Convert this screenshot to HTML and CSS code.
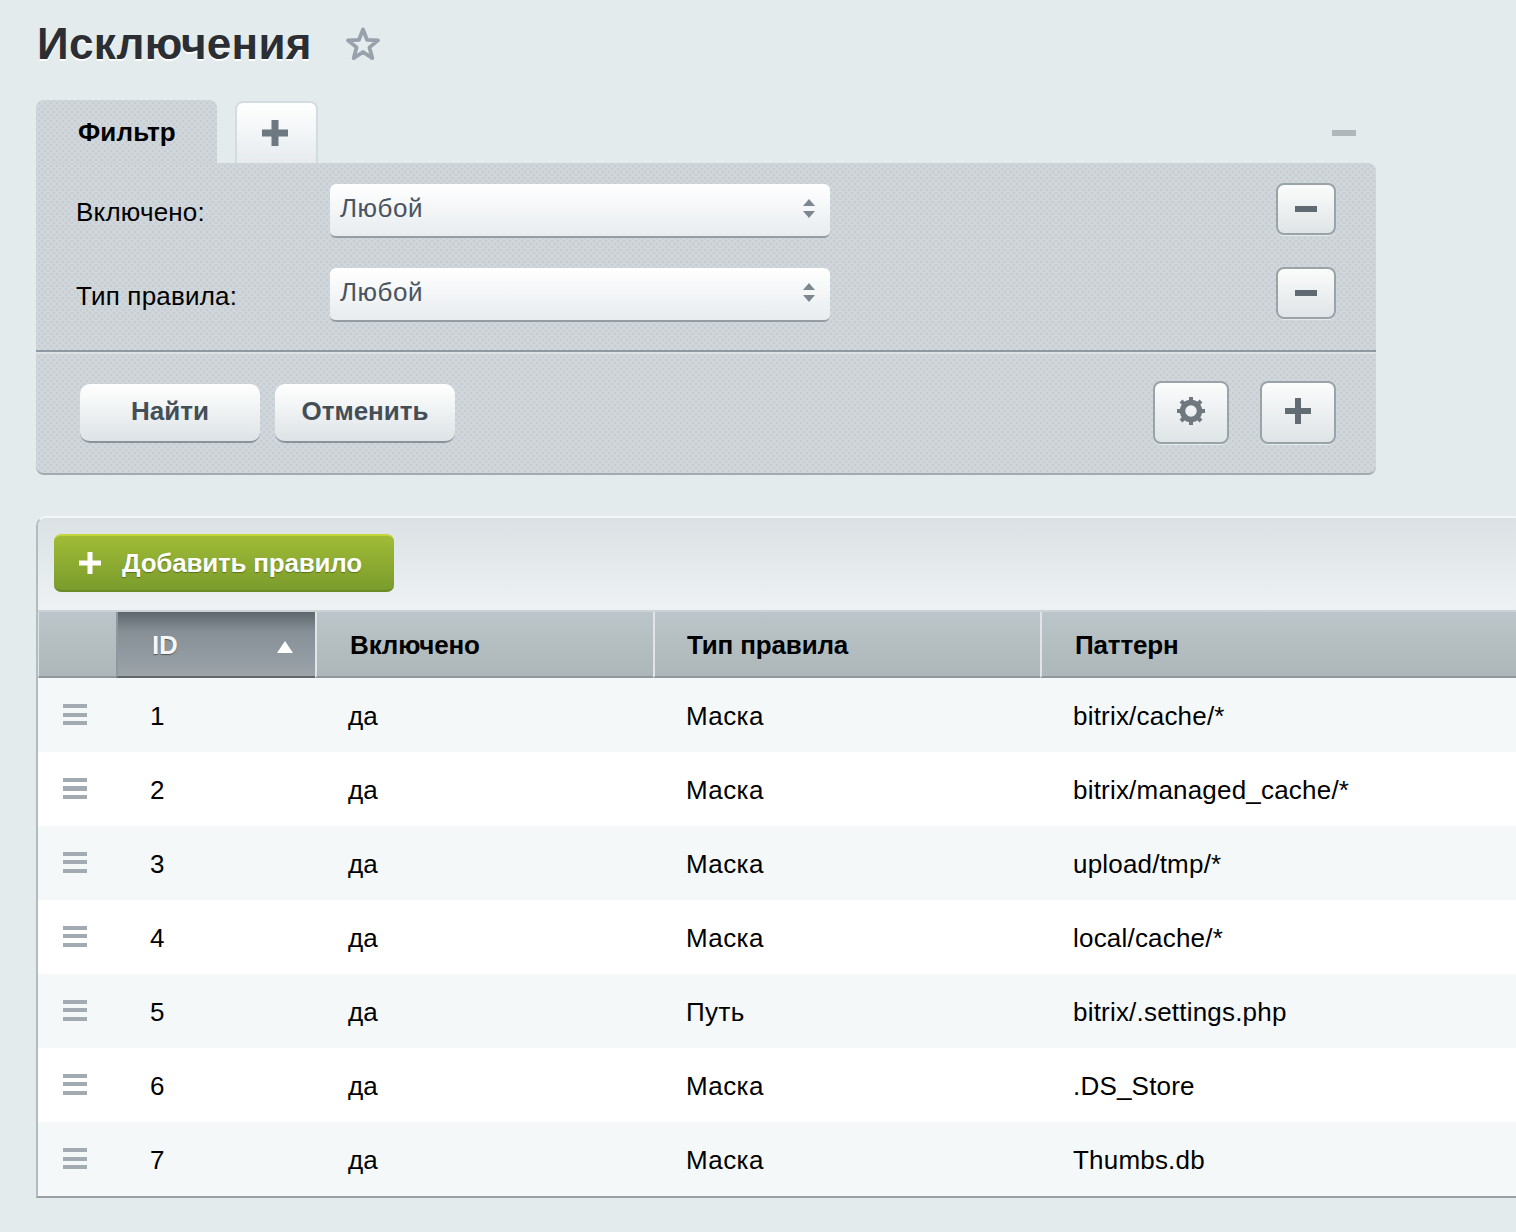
FILE: index.html
```html
<!doctype html>
<html lang="ru">
    <head>
        <meta charset="UTF-8" />
        <title>Исключения</title>
        <link rel="stylesheet" href="styles.css">
    </head>
    <body>
        <div class="title-row">
            <h1>Исключения</h1>
            <svg class="star" width="36" height="36" viewBox="0 0 36 36">
                <path d="M18 3.500l4 10.300 11 .6-8.600 7 2.900 10.700L18 26l-9.300 6.100 2.900-10.700-8.600-7 11-.6z" fill="#e6ebee" stroke="#98a1ac" stroke-width="3.800" stroke-linejoin="round" />
            </svg>
        </div>

        <section class="filter">
            <div class="filter-tabs">
                <div class="tab tab-active">Фильтр</div>
                <div class="tab tab-add">
                    <svg width="28" height="28" viewBox="0 0 28 28"><path d="M10.500 1h7v9.500H27v7h-9.500V27h-7v-9.500H1v-7h9.500z" fill="#6d7880" /></svg>
                </div>
                <div class="collapse"></div>
            </div>
            <div class="filter-body">
                <div class="filter-row">
                    <label>Включено:</label>
                    <div class="select">
                        <span>Любой</span>
                        <i class="select-arrows"></i>
                    </div>
                    <button class="icon-btn btn-small"><i class="minus"></i></button>
                </div>
                <div class="filter-row">
                    <label>Тип правила:</label>
                    <div class="select">
                        <span>Любой</span>
                        <i class="select-arrows"></i>
                    </div>
                    <button class="icon-btn btn-small"><i class="minus"></i></button>
                </div>
            </div>
            <div class="filter-footer">
                <button class="btn">Найти</button>
                <button class="btn">Отменить</button>
                <button class="icon-btn btn-gear">
                    <svg width="30" height="30" viewBox="0 0 30 30">
                        <circle cx="15" cy="15" r="8.500" fill="none" stroke="#6f787e" stroke-width="5.500" />
                        <g stroke="#6f787e" stroke-width="4">
                            <path d="M15 1v5M15 24v5M1 15h5M24 15h5M5 5l3.500 3.500M21.500 21.500L25 25M5 25l3.500-3.500M21.500 8.500L25 5" />
                        </g>
                    </svg>
                </button>
                <button class="icon-btn btn-plus">
                    <svg width="28" height="28" viewBox="0 0 28 28"><path d="M11 1h6v10h10v6H17v10h-6V17H1v-6h10z" fill="#626c73" /></svg>
                </button>
            </div>
        </section>

        <section class="grid">
            <div class="toolbar">
                <button class="btn-green">
                    <svg width="24" height="24" viewBox="0 0 24 24"><path d="M9.500 1h5v8.500H23v5h-8.500V23h-5v-8.500H1v-5h8.500z" fill="#fff" /></svg>
                    Добавить правило
                </button>
            </div>
            <table>
                <thead>
                    <tr>
                        <th class="col-handle"></th>
                        <th class="col-id">ID <i class="sort-arrow"></i></th>
                        <th class="col-active">Включено</th>
                        <th class="col-type">Тип правила</th>
                        <th class="col-pattern">Паттерн</th>
                    </tr>
                </thead>
                <tbody>
                    <tr><td><i class="handle"></i></td><td>1</td><td>да</td><td>Маска</td><td>bitrix/cache/*</td></tr>
                    <tr><td><i class="handle"></i></td><td>2</td><td>да</td><td>Маска</td><td>bitrix/managed_cache/*</td></tr>
                    <tr><td><i class="handle"></i></td><td>3</td><td>да</td><td>Маска</td><td>upload/tmp/*</td></tr>
                    <tr><td><i class="handle"></i></td><td>4</td><td>да</td><td>Маска</td><td>local/cache/*</td></tr>
                    <tr><td><i class="handle"></i></td><td>5</td><td>да</td><td>Путь</td><td>bitrix/.settings.php</td></tr>
                    <tr><td><i class="handle"></i></td><td>6</td><td>да</td><td>Маска</td><td>.DS_Store</td></tr>
                    <tr><td><i class="handle"></i></td><td>7</td><td>да</td><td>Маска</td><td>Thumbs.db</td></tr>
                </tbody>
            </table>
        </section>
    </body>
</html>
```

FILE: styles.css
```css
:root {
    --page-color: #e3ebed;
    --panel-color: #d1d7db;
    --dot-color: #c5ccd2;
    --text-color: #000;
    --button-text: #434e57;
}

body {
    font-family: "Liberation Sans", Arial, sans-serif;
    margin: 0;
    height: 1232px;
    overflow: hidden;
    background-color: var(--page-color);
    color: var(--text-color);
    font-size: 26px;
}

button {
    font-family: inherit;
    padding: 0;
    cursor: pointer;
}

/* title */
.title-row {
    display: flex;
    align-items: center;
    height: 100px;
    padding-left: 37px;
    padding-bottom: 12px;
    box-sizing: border-box;
}

.title-row h1 {
    font-size: 44px;
    line-height: 50px;
    letter-spacing: 0.3px;
    margin: 0;
    color: #2b2e33;
    text-shadow: 0 2px 0 #fff;
}

.star {
    margin-left: 33px;
}

/* filter */
.filter {
    width: 1340px;
    margin-left: 36px;
}

.filter-tabs {
    display: flex;
    align-items: stretch;
    height: 63px;
}

.tab {
    box-sizing: border-box;
    border-radius: 8px 8px 0 0;
}

.tab-active,
.filter-body,
.filter-footer {
    background-color: var(--panel-color);
    background-image:
        radial-gradient(circle, var(--dot-color) 1.2px, transparent 1.700px),
        radial-gradient(circle, var(--dot-color) 1.2px, transparent 1.700px);
    background-size: 6px 6px;
    background-position: 0 0, 3px 3px;
}

.tab-active {
    width: 181px;
    padding: 16px 0 0 42px;
    font-weight: bold;
    font-size: 26px;
    line-height: 32px;
    letter-spacing: 0.15px;
}

.tab-add {
    display: flex;
    align-items: center;
    justify-content: center;
    width: 83px;
    margin-left: 18px;
    margin-top: 1px;
    padding-right: 3px;
    border: 2px solid #d5dcdf;
    border-bottom: 0;
    background: linear-gradient(#fff, #e6ebee);
}

.collapse {
    width: 24px;
    height: 6px;
    margin: 30px 20px 0 auto;
    background-color: #b0b7bb;
}

.filter-body {
    box-sizing: border-box;
    height: 189px;
    padding: 20px 40px 0 40px;
    border-top-right-radius: 8px;
    border-bottom: 2px solid #8f99a1;
}

.filter-row {
    display: flex;
    align-items: flex-start;
    height: 84px;
}

.filter-row label {
    width: 254px;
    padding-top: 14px;
    line-height: 30px;
    letter-spacing: 0.2px;
}

.select {
    display: flex;
    align-items: center;
    justify-content: space-between;
    box-sizing: border-box;
    width: 500px;
    height: 54px;
    margin-top: 1px;
    padding: 0 15px 4px 10px;
    border-radius: 6px;
    border-bottom: 2px solid #979ea3;
    background: linear-gradient(#fff, #e8ecef);
    color: #4a545e;
    letter-spacing: 0.5px;
}

.select-arrows {
    position: relative;
    width: 12px;
    height: 19px;
}

.select-arrows::before,
.select-arrows::after {
    content: "";
    position: absolute;
    left: 0;
    border-left: 6px solid transparent;
    border-right: 6px solid transparent;
}

.select-arrows::before {
    top: 0;
    border-bottom: 7px solid #7d878f;
}

.select-arrows::after {
    bottom: 0;
    border-top: 7px solid #7d878f;
}

.icon-btn {
    display: flex;
    align-items: center;
    justify-content: center;
    box-sizing: border-box;
    border: 2px solid #9aa3a8;
    border-radius: 8px;
    background: linear-gradient(#fbfcfc, #dfe4e6);
    box-shadow: 0 1px 0 #e4e9eb;
}

.btn-small {
    width: 60px;
    height: 52px;
    margin-left: auto;
}

.minus {
    display: block;
    width: 22px;
    height: 6px;
    background-color: #5f6a72;
}

.filter-footer {
    display: flex;
    align-items: flex-start;
    box-sizing: border-box;
    height: 123px;
    padding: 30px 40px 0 44px;
    border-radius: 0 0 8px 8px;
    border-top: 2px solid #dde2e5;
    border-bottom: 2px solid #a4abb0;
}

.btn {
    box-sizing: border-box;
    width: 180px;
    height: 59px;
    margin-right: 15px;
    padding-bottom: 3px;
    border: 0;
    border-bottom: 2px solid #8a9399;
    border-radius: 10px;
    background: linear-gradient(#fff, #dde3e6);
    color: var(--button-text);
    font-size: 26px;
    font-weight: bold;
}

.btn-gear,
.btn-plus {
    width: 76px;
    height: 63px;
    margin-top: -3px;
    padding-bottom: 3px;
}

.btn-gear {
    margin-left: auto;
}

.btn-plus {
    margin-left: 31px;
}

/* grid */
.grid {
    box-sizing: border-box;
    height: 682px;
    margin: 41px 0 0 36px;
    border-top: 2px solid #f4f7f8;
    border-left: 2px solid #b4bbc0;
    border-bottom: 2px solid #9aa0a3;
    border-radius: 10px 0 0 0;
}

.toolbar {
    box-sizing: border-box;
    height: 94px;
    padding: 16px 0 0 16px;
    background: linear-gradient(#dbe1e4, #eef2f4);
    border-bottom: 2px solid #ccd3d7;
    border-radius: 8px 0 0 0;
}

.btn-green {
    display: flex;
    align-items: center;
    gap: 20px;
    box-sizing: border-box;
    width: 340px;
    height: 58px;
    padding: 0 0 0 24px;
    border: 0;
    border-top: 2px solid #c3d73c;
    border-bottom: 2px solid #6b8a28;
    border-radius: 7px;
    background: linear-gradient(#a0bb36, #7a9c2c);
    color: #fff;
    font-size: 26px;
    font-weight: bold;
    letter-spacing: -0.2px;
    text-shadow: 0 1px 1px rgba(60, 80, 10, 0.6);
}

table {
    width: 100%;
    table-layout: fixed;
    border-collapse: separate;
    border-spacing: 0;
}

th {
    box-sizing: border-box;
    height: 66px;
    padding: 2px 0 0 33px;
    text-align: left;
    font-size: 26px;
    letter-spacing: -0.15px;
    background: linear-gradient(#bcc6ca, #adb7b9);
    border-left: 2px solid #e0e5e7;
    border-bottom: 2px solid #8f989c;
}

th.col-handle {
    width: 78px;
    border-left: 1px solid #dfe4e6;
}

th.col-id {
    position: relative;
    width: 199px;
    padding-left: 34px;
    color: #f4f6f7;
    background: linear-gradient(#5e666d, #868f96 30%, #9ca4aa);
    text-shadow: 0 1px 1px #555;
    border-left-color: #8f989c;
    border-bottom-color: #5f676d;
}

th.col-active {
    width: 338px;
}

th.col-type {
    width: 387px;
    padding-left: 32px;
}

.sort-arrow {
    position: absolute;
    top: 29px;
    right: 22px;
    border-left: 8px solid transparent;
    border-right: 8px solid transparent;
    border-bottom: 12px solid #fff;
}

td {
    height: 74px;
    padding: 2px 0 0 33px;
    box-sizing: border-box;
    font-size: 26px;
    line-height: 30px;
    background-color: #fff;
}

td:first-child {
    padding: 0 0 0 25px;
}

td:nth-child(2) {
    padding-left: 34px;
}

td:nth-child(4) {
    letter-spacing: 0.4px;
}

td:nth-child(5) {
    letter-spacing: 0.2px;
}

tbody tr:nth-child(odd) td {
    background-color: #f4f8f9;
}

.handle {
    display: block;
    width: 24px;
    height: 21px;
    margin-top: -2px;
    background: repeating-linear-gradient(#a2abb2 0, #a2abb2 4px, transparent 4px, transparent 8.500px);
}
```
